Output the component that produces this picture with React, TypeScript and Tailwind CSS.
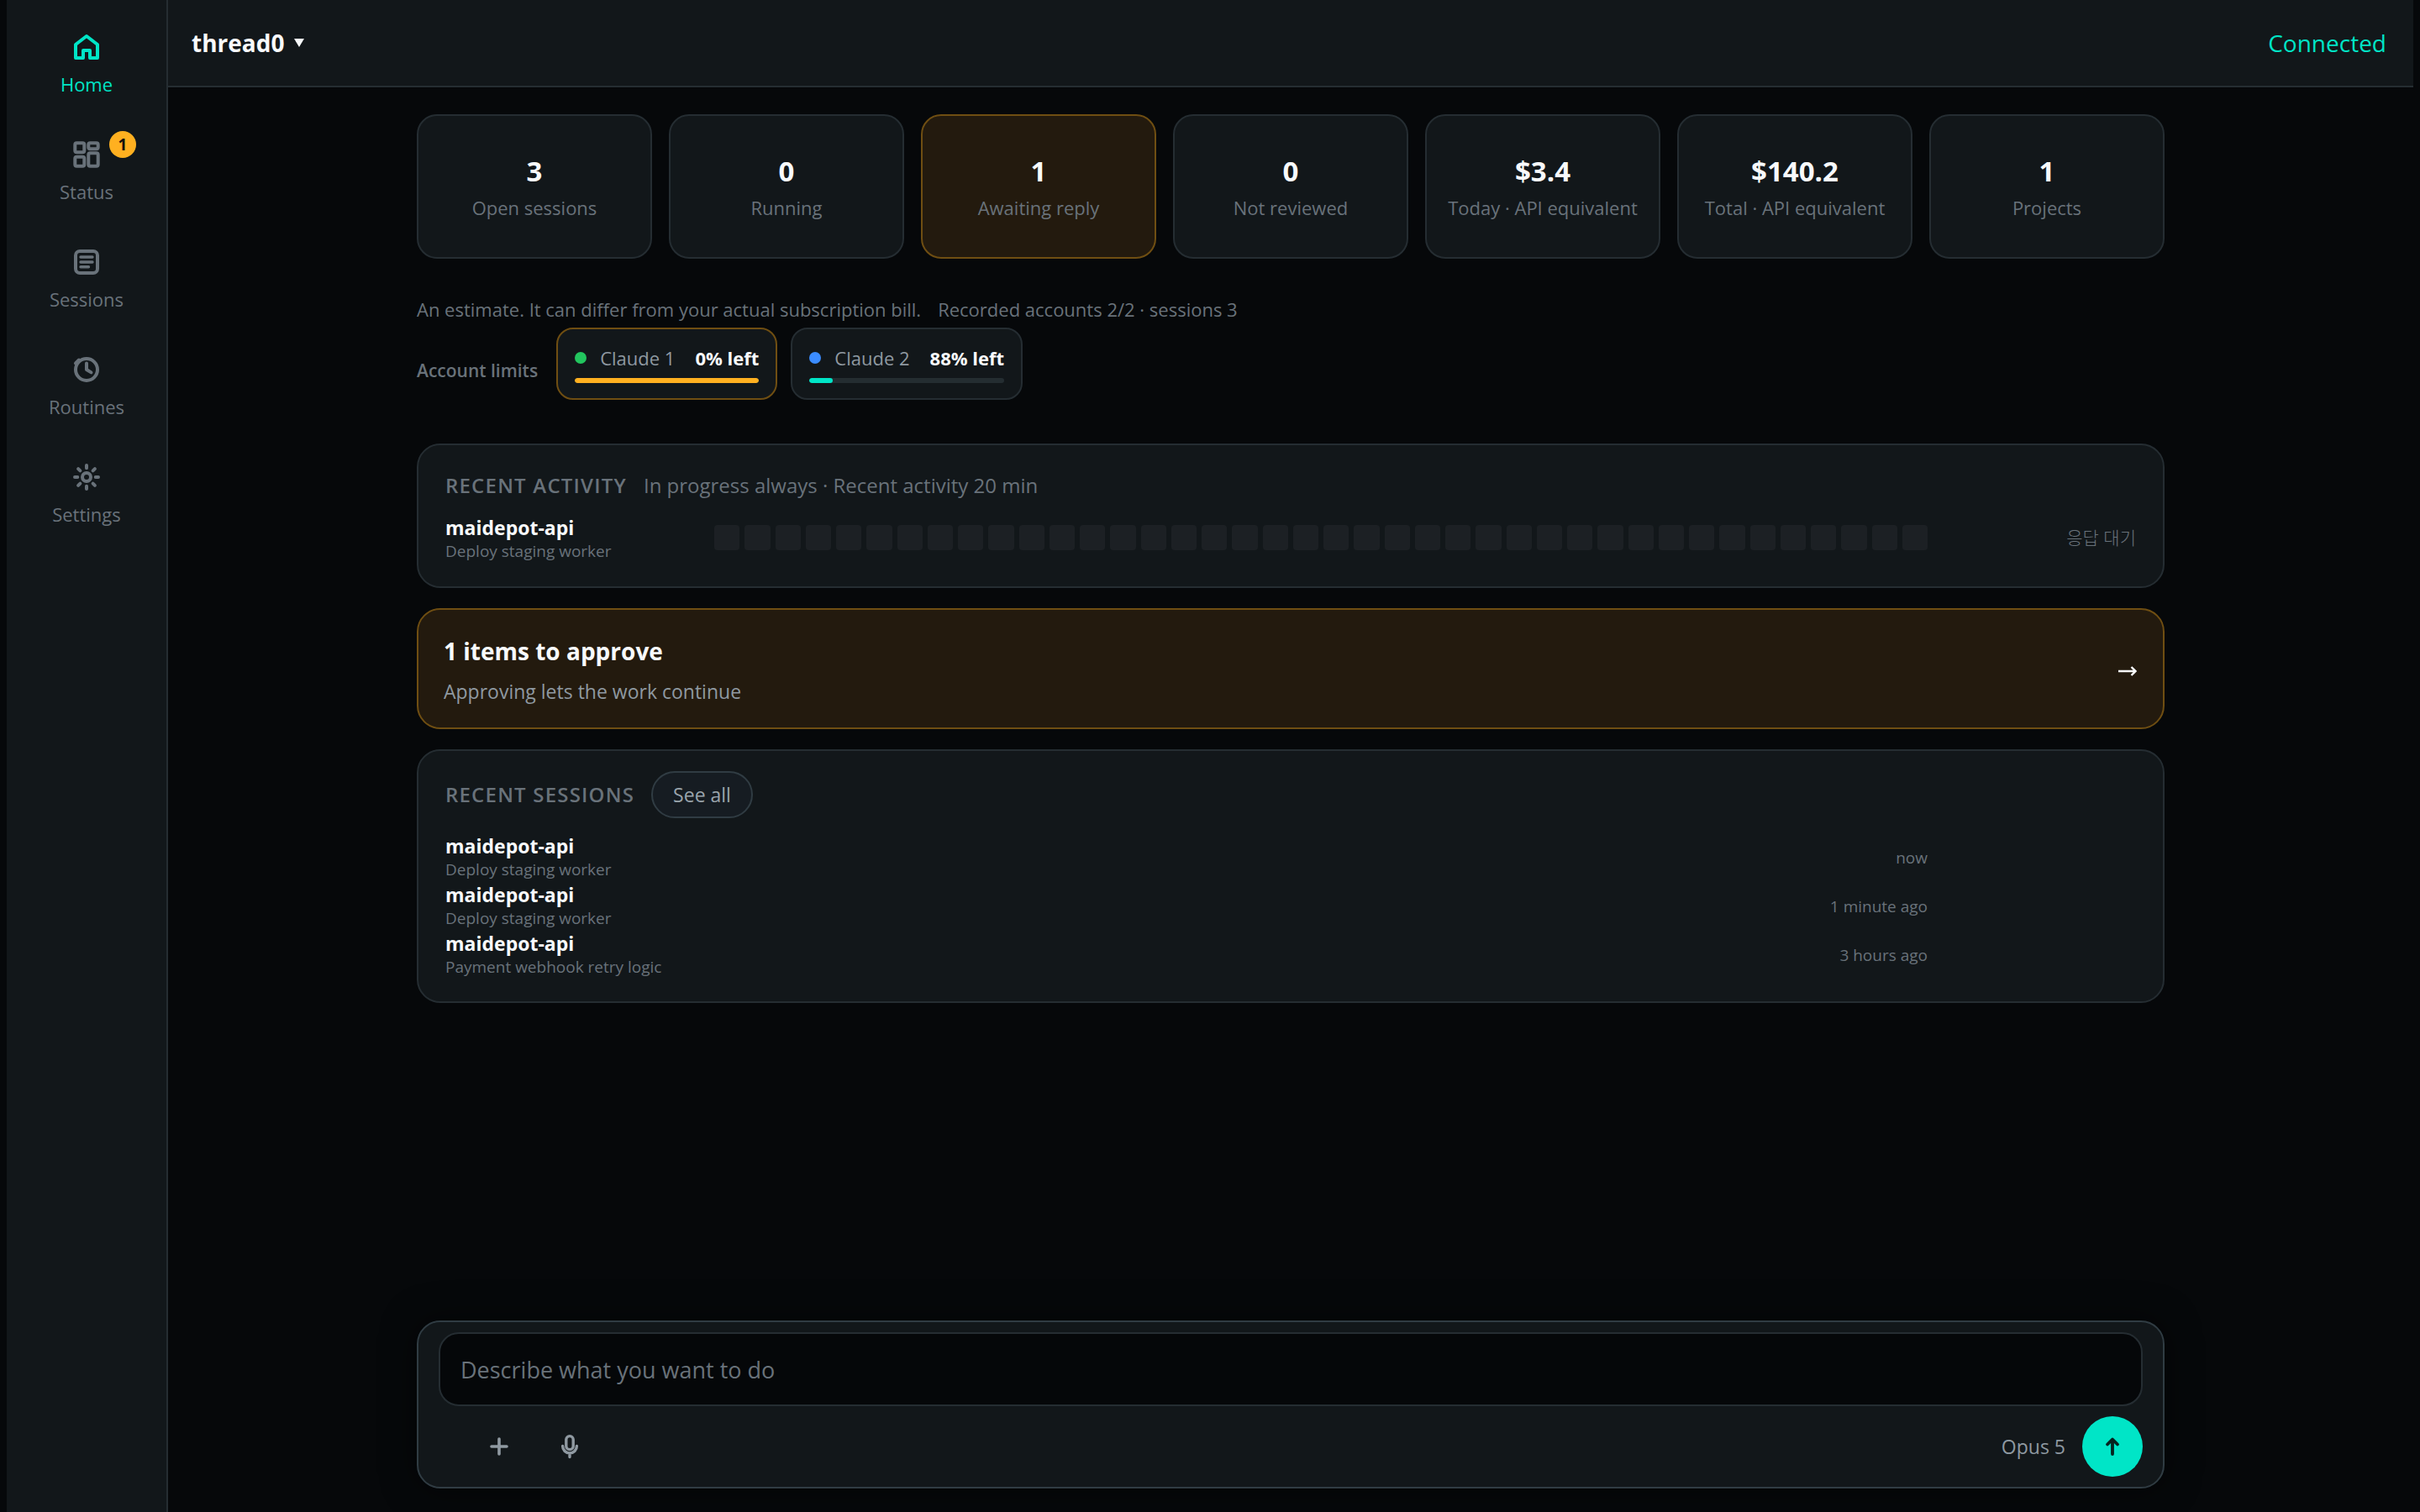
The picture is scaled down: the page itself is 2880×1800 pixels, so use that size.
import { useState } from "react"
import type { ReactNode } from "react"

interface NavItem {
  label: string
  icon: ReactNode
  badge?: number
}

interface Stat {
  value: string
  label: string
  alert?: boolean
}

interface Account {
  name: string
  left: string
  used: number
  dot: string
  bar: string
  border: string
}

interface Session {
  project: string
  task: string
  when: string
}

const NAV: NavItem[] = [
  {
    label: "Home",
    icon: <path d="M7 17 20 7l13 10v16h-9v-9h-8v9H7z" />,
  },
  {
    label: "Status",
    badge: 1,
    icon: (
      <>
        <rect x="6.3" y="6.3" width="11" height="11" rx="2" />
        <rect x="22.3" y="6.3" width="11.4" height="7" rx="2" />
        <rect x="22.3" y="18.3" width="11.4" height="15.4" rx="2" />
        <rect x="6.3" y="22.7" width="11" height="11" rx="2" />
      </>
    ),
  },
  {
    label: "Sessions",
    icon: (
      <>
        <rect x="7" y="7" width="26" height="26" rx="5" />
        <path d="M13 14h14M13 20h14M13 25.7h9.5" strokeWidth="3.4" />
      </>
    ),
  },
  {
    label: "Routines",
    icon: (
      <>
        <circle cx="20" cy="20" r="13" />
        <path d="M20 12.5V20l5.5 3.4" />
        <path d="m7 12.5 4-4" />
      </>
    ),
  },
  {
    label: "Settings",
    icon: (
      <>
        <circle cx="20" cy="20" r="5" />
        <path d="M20 6v3.3M20 30.7V34M6 20h3.3M30.7 20H34M10.1 10.1l2.3 2.3M27.6 27.6l2.3 2.3M29.9 10.1l-2.3 2.3M12.4 27.6l-2.3 2.3" />
      </>
    ),
  },
]

const STATS: Stat[] = [
  { value: "3", label: "Open sessions" },
  { value: "0", label: "Running" },
  { value: "1", label: "Awaiting reply", alert: true },
  { value: "0", label: "Not reviewed" },
  { value: "$3.4", label: "Today · API equivalent" },
  { value: "$140.2", label: "Total · API equivalent" },
  { value: "1", label: "Projects" },
]

const ACCOUNTS: Account[] = [
  { name: "Claude 1", left: "0% left", used: 100, dot: "bg-[#22c55e]", bar: "bg-[#ffb020]", border: "border-[#6f4e12]" },
  { name: "Claude 2", left: "88% left", used: 12, dot: "bg-[#3b8cff]", bar: "bg-[#00e5c7]", border: "border-[#252d32]" },
]

const SESSIONS: Session[] = [
  { project: "maidepot-api", task: "Deploy staging worker", when: "now" },
  { project: "maidepot-api", task: "Deploy staging worker", when: "1 minute ago" },
  { project: "maidepot-api", task: "Payment webhook retry logic", when: "3 hours ago" },
]

const SLOTS = 40

function Sidebar({ active, onSelect }: { active: string; onSelect: (label: string) => void }) {
  return (
    <nav className="flex w-48 shrink-0 flex-col items-center gap-12 border-r-2 border-[#252d32] bg-[#12171a] pt-9">
      {NAV.map((item) => (
        <button
          key={item.label}
          onClick={() => onSelect(item.label)}
          className={`relative flex w-full flex-col items-center gap-2 text-[22px] leading-8 ${
            item.label === active ? "text-[#00e5c7]" : "text-[#69727a]"
          }`}
        >
          <svg viewBox="0 0 40 40" className="size-10" fill="none" stroke="currentColor" strokeWidth="4" strokeLinecap="round" strokeLinejoin="round">
            {item.icon}
          </svg>
          {item.label}
          {item.badge && (
            <span className="absolute -top-2 right-9 size-8 rounded-full bg-[#ffb020] text-[19px] font-bold leading-8 text-[#14100a]">
              {item.badge}
            </span>
          )}
        </button>
      ))}
    </nav>
  )
}

function StatCard({ stat }: { stat: Stat }) {
  return (
    <div
      className={`flex h-[172px] flex-col items-center justify-center rounded-3xl border-2 ${
        stat.alert ? "border-[#6f4e12] bg-[#231a0e]" : "border-[#252d32] bg-[#12171a]"
      }`}
    >
      <div className="text-[33px] font-bold leading-[46px] text-[#f8fafc]">{stat.value}</div>
      <div className="mt-1 whitespace-nowrap text-[22px] leading-8 text-[#69727a]">{stat.label}</div>
    </div>
  )
}

function AccountChip({ account }: { account: Account }) {
  return (
    <div className={`flex h-[86px] flex-col justify-center gap-2 rounded-[20px] border-2 bg-[#12171a] px-5 ${account.border}`}>
      <div className="flex items-center leading-8">
        <span className={`mr-4 size-[14px] rounded-full ${account.dot}`} />
        <span className="mr-6 text-[22px] text-[#8f99a1]">{account.name}</span>
        <span className="text-[22px] font-bold text-[#f8fafc]">{account.left}</span>
      </div>
      <div className="h-[6px] overflow-hidden rounded-full bg-[#242d31]">
        <div className={`h-full rounded-full ${account.bar}`} style={{ width: `${account.used}%` }} />
      </div>
    </div>
  )
}

function SessionName({ project, task }: { project: string; task: string }) {
  return (
    <div className="min-w-0">
      <div className="truncate text-[23px] font-bold leading-8 text-[#f8fafc]">{project}</div>
      <div className="truncate text-[19px] leading-6 text-[#69727a]">{task}</div>
    </div>
  )
}

export default function App() {
  const [active, setActive] = useState("Home")
  const [prompt, setPrompt] = useState("")

  return (
    <div className="flex h-screen bg-[#06080a] px-2 font-['Open_Sans','Noto_Sans_CJK_KR',sans-serif] text-[#f8fafc]">
      <Sidebar active={active} onSelect={setActive} />

      <div className="flex min-w-0 flex-1 flex-col">
        <header className="flex h-[104px] shrink-0 items-center justify-between border-b-2 border-[#252d32] bg-[#12171a] pl-7 pr-8">
          <button className="flex items-center gap-3 text-[28px] font-bold leading-10">
            thread0
            <svg viewBox="0 0 12 10" className="h-[10px] w-3" fill="currentColor">
              <path d="M0 0h12L6 10z" />
            </svg>
          </button>
          <span className="text-[28px] leading-10 text-[#00e5c7]">Connected</span>
        </header>

        <div className="mx-auto flex min-h-0 w-full max-w-[2080px] flex-1 flex-col pb-7 pt-8">
          <main className="min-h-0 flex-1">
            <section className="grid grid-cols-7 gap-5">
              {STATS.map((stat) => (
                <StatCard key={stat.label} stat={stat} />
              ))}
            </section>

            <p className="mt-11 flex gap-5 text-[22px] leading-8 text-[#69727a]">
              <span>An estimate. It can differ from your actual subscription bill.</span>
              <span>Recorded accounts 2/2 · sessions 3</span>
            </p>
            <section className="mt-[6px] flex items-center">
              <h2 className="mr-[22px] pt-4 text-[21px] font-semibold leading-8 text-[#69727a]">Account limits</h2>
              <div className="flex gap-4">
                {ACCOUNTS.map((account) => (
                  <AccountChip key={account.name} account={account} />
                ))}
              </div>
            </section>

            {/* Recent activity */}
            <section className="mt-[52px] rounded-[28px] border-2 border-[#252d32] bg-[#12171a] px-8 py-[30px]">
              <div className="flex items-center gap-5 text-[24px] leading-9 text-[#69727a]">
                <h2 className="font-semibold tracking-wider">RECENT ACTIVITY</h2>
                <span>In progress always · Recent activity 20 min</span>
              </div>
              <div className="mt-4 grid grid-cols-[300px_1fr_228px] items-center gap-5">
                <SessionName project="maidepot-api" task="Deploy staging worker" />
                <div className="flex gap-[6px]">
                  {Array.from({ length: SLOTS }).map((_, i) => (
                    <div key={i} className="h-[30px] flex-1 rounded-[4px] bg-[#1c2024]" />
                  ))}
                </div>
                <div className="text-right text-[21px] font-light leading-8 text-[#69727a]">응답 대기</div>
              </div>
            </section>

            {/* Approvals */}
            <button className="mt-6 flex h-36 w-full items-center justify-between rounded-[28px] border-2 border-[#6f4e12] bg-[#231a0e] px-[30px] pt-[6px] text-left">
              <span>
                <span className="block text-[28px] font-bold leading-10">1 items to approve</span>
                <span className="mt-2 block text-[23px] leading-10 text-[#8f99a1]">Approving lets the work continue</span>
              </span>
              <svg viewBox="0 0 24 16" className="h-4 w-6" fill="none" stroke="currentColor" strokeWidth="2.4">
                <path d="M1 8h20M16.5 3l5 5-5 5" />
              </svg>
            </button>

            {/* Recent sessions */}
            <section className="mt-6 rounded-[28px] border-2 border-[#252d32] bg-[#12171a] px-8 pb-7 pt-6">
              <div className="mb-4 flex items-center gap-5">
                <h2 className="text-[24px] font-semibold leading-9 tracking-wider text-[#69727a]">RECENT SESSIONS</h2>
                <button className="h-14 rounded-full border-2 border-[#303c43] bg-[#161c22] px-6 text-[23px] leading-8 text-[#9aa4ac]">
                  See all
                </button>
              </div>
              {SESSIONS.map((session, i) => (
                <div key={i} className="grid h-[58px] grid-cols-[1fr_300px_228px] items-center gap-5">
                  <SessionName project={session.project} task={session.task} />
                  <div className="pt-1 text-right text-[19px] leading-8 text-[#69727a]">{session.when}</div>
                </div>
              ))}
            </section>
          </main>

          <form
            onSubmit={(e) => {
              e.preventDefault()
              setPrompt("")
            }}
            className="rounded-[28px] border-2 border-[#303c43] bg-[#12171a] px-6 py-3 shadow-[0_0_40px_0_rgba(0,0,0,0.5)]"
          >
            <input
              aria-label="Describe what you want to do"
              value={prompt}
              onChange={(e) => setPrompt(e.target.value)}
              placeholder="Describe what you want to do"
              className="block h-[88px] w-full rounded-3xl border-2 border-[#252d32] bg-[#050709] px-6 text-[27px] text-[#f8fafc] placeholder-[#69727a] focus:outline-none"
            />
            <div className="mt-3 flex items-center gap-3 pl-9">
              <button type="button" aria-label="Attach" className="flex size-[72px] items-center justify-center text-[#8f99a1]">
                <svg viewBox="0 0 32 32" className="size-8" fill="none" stroke="currentColor" strokeWidth="3.6" strokeLinecap="round">
                  <path d="M16 7v18M7 16h18" />
                </svg>
              </button>
              <button type="button" aria-label="Dictate" className="flex size-[72px] items-center justify-center text-[#8f99a1]">
                <svg viewBox="0 0 32 32" className="size-8" fill="none" stroke="currentColor" strokeWidth="3.4" strokeLinecap="round">
                  <rect x="11.8" y="3.6" width="8.4" height="16" rx="4.2" />
                  <path d="M7.6 15.5a8.4 8.4 0 0 0 16.8 0M16 24.5v4" />
                </svg>
              </button>
              <span className="ml-auto mr-2 text-[23px] leading-8 text-[#8f99a1]">Opus 5</span>
              <button aria-label="Send" className="flex size-[72px] items-center justify-center rounded-full bg-[#00e5c7] text-[#05231f]">
                <svg viewBox="0 0 32 32" className="size-8" fill="none" stroke="currentColor" strokeWidth="3.8" strokeLinecap="round" strokeLinejoin="round">
                  <path d="M16 25V8M10 13.5l6-6 6 6" />
                </svg>
              </button>
            </div>
          </form>
        </div>
      </div>
    </div>
  )
}
